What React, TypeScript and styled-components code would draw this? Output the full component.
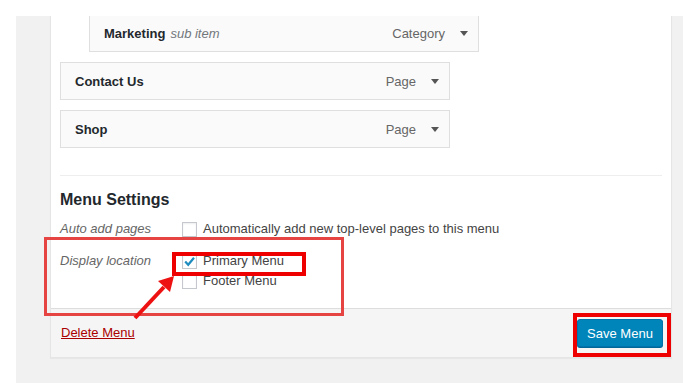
import React from 'react';
import styled, { createGlobalStyle } from 'styled-components';

const GlobalStyle = createGlobalStyle`
  html, body {
    margin: 0;
    background: #fff;
  }
  body {
    font-family: "Liberation Sans", Arial, sans-serif;
    font-size: 13px;
    color: #444;
  }
`;

const Page = styled.div`
  position: relative;
  height: 383px;
  overflow: hidden;
  padding: 16px 17px 0 16px;
  box-sizing: border-box;
`;

const Frame = styled.div`
  height: 100%;
  background: #f1f1f1;
  padding: 0 11px 0 34px;
  box-sizing: border-box;
`;

const Panel = styled.div`
  background: #fff;
  border: 1px solid #e5e5e5;
  border-top: none;
  box-shadow: 0 1px 1px rgba(0, 0, 0, 0.04);
`;

const Body = styled.div`
  padding: 0 9px 17px 9px;
`;

const MenuList = styled.div`
  overflow: hidden;
  display: flex;
  flex-direction: column;
  gap: 10px;

  & > :first-child {
    margin-top: -2px;
  }
`;

const ItemHandle = styled.div<{ $depth: number }>`
  width: 390px;
  height: 38px;
  box-sizing: border-box;
  margin-left: ${p => p.$depth * 29}px;
  border: 1px solid #dfdfdf;
  background: #fafafa;
  display: flex;
  align-items: center;
  padding: 0 10px 0 14px;
`;

const ItemTitle = styled.span`
  font-weight: bold;
  color: #23282d;
`;

const SubLabel = styled.span`
  font-style: italic;
  color: #72777c;
  margin-left: 5px;
`;

const ItemType = styled.span`
  margin-left: auto;
  color: #666;
  margin-right: 15px;
`;

const Caret = styled.span`
  width: 0;
  height: 0;
  border-left: 4px solid transparent;
  border-right: 4px solid transparent;
  border-top: 5px solid #555;
`;

const Settings = styled.div`
  margin-top: 27px;
  border-top: 1px solid #eee;
`;

const Heading = styled.h3`
  margin: 13px 0 9px;
  font-size: 16px;
  line-height: 21px;
  font-weight: 600;
  color: #23282d;
`;

const SettingsGrid = styled.div`
  display: grid;
  grid-template-columns: 122px auto;
  row-gap: 12px;
`;

const Label = styled.div`
  font-style: italic;
  color: #666;
  line-height: 20px;
`;

const Options = styled.div`
  display: flex;
  flex-direction: column;
`;

const Option = styled.label`
  display: flex;
  align-items: center;
  gap: 6px;
  line-height: 20px;
  color: #444;
`;

const Box = styled.span`
  width: 15px;
  height: 15px;
  box-sizing: border-box;
  border: 1px solid #c5c9cd;
  background: #fff;
  box-shadow: inset 0 1px 2px rgba(0, 0, 0, 0.07);
  display: flex;
  align-items: center;
  justify-content: center;
`;

const Footer = styled.div`
  height: 49px;
  box-sizing: border-box;
  border-top: 1px solid #ddd;
  background: #f5f5f5;
  display: flex;
  align-items: center;
  justify-content: space-between;
  padding: 0 8px 0 10px;
`;

const DeleteLink = styled.a`
  color: #a00;
  text-decoration: underline;
  margin-top: -2px;
`;

const SaveButton = styled.button`
  width: 86px;
  height: 28px;
  border: 1px solid #0073aa;
  border-radius: 3px;
  background: #0085ba;
  box-shadow: 0 1px 0 #006799;
  color: #fff;
  font-family: inherit;
  font-size: 13px;
  padding: 0;
`;

const Mark = styled.div<{ $x: number; $y: number; $w: number; $h: number; $thick: number; $color: string }>`
  position: absolute;
  left: ${p => p.$x}px;
  top: ${p => p.$y}px;
  width: ${p => p.$w}px;
  height: ${p => p.$h}px;
  box-sizing: border-box;
  border: ${p => p.$thick}px solid ${p => p.$color};
  pointer-events: none;
`;

const ArrowLayer = styled.svg`
  position: absolute;
  left: 0;
  top: 0;
  pointer-events: none;
`;

const Check = () => (
  <svg width="13" height="13" viewBox="0 0 13 13">
    <path d="M2.2 6.6 L5.2 9.8 L11 2.8" fill="none" stroke="#1e8cbe" strokeWidth="2.2" />
  </svg>
);

const items = [
  { title: 'Marketing', sub: 'sub item', type: 'Category', depth: 1 },
  { title: 'Contact Us', type: 'Page', depth: 0 },
  { title: 'Shop', type: 'Page', depth: 0 },
];

export default function App() {
  return (
    <Page>
      <GlobalStyle />
      <Frame>
        <Panel>
          <Body>
            <MenuList>
              {items.map(item => (
                <ItemHandle key={item.title} $depth={item.depth}>
                  <ItemTitle>{item.title}</ItemTitle>
                  {item.sub && <SubLabel>{item.sub}</SubLabel>}
                  <ItemType>{item.type}</ItemType>
                  <Caret />
                </ItemHandle>
              ))}
            </MenuList>

            <Settings>
              <Heading>Menu Settings</Heading>
              <SettingsGrid>
                <Label>Auto add pages</Label>
                <Options>
                  <Option>
                    <Box />
                    Automatically add new top-level pages to this menu
                  </Option>
                </Options>
                <Label>Display location</Label>
                <Options>
                  <Option>
                    <Box><Check /></Box>
                    Primary Menu
                  </Option>
                  <Option>
                    <Box />
                    Footer Menu
                  </Option>
                </Options>
              </SettingsGrid>
            </Settings>
          </Body>

          <Footer>
            <DeleteLink href="#">Delete Menu</DeleteLink>
            <SaveButton>Save Menu</SaveButton>
          </Footer>
        </Panel>
      </Frame>

      {/* annotations drawn over the screenshot */}
      <Mark $x={44} $y={237} $w={300} $h={79} $thick={3} $color="#e64343" />
      <Mark $x={172} $y={252} $w={134} $h={24} $thick={4} $color="#ee0000" />
      <Mark $x={573} $y={313} $w={98} $h={44} $thick={4} $color="#ee0000" />
      <ArrowLayer width="700" height="383">
        <line x1="135" y1="318" x2="164" y2="287" stroke="#ee1111" strokeWidth="4" />
        <polygon points="174,276 170,292 158,281" fill="#ee1111" />
      </ArrowLayer>
    </Page>
  );
}
